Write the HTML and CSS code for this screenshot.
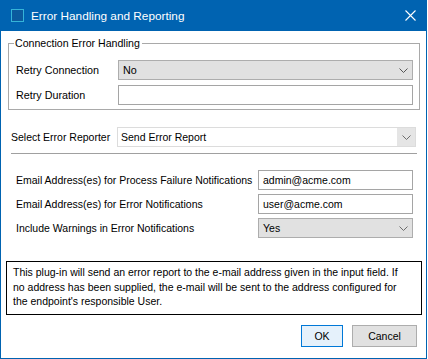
FILE: index.html
```html
<!DOCTYPE html>
<html>
<head>
<meta charset="utf-8">
<link rel="stylesheet" href="styles.css">
</head>
<body>
<div class="window">
  <div class="titlebar">
    <span class="app-icon"></span>
    <span class="title">Error Handling and Reporting</span>
    <svg class="close" width="11" height="11" viewBox="0 0 11 11"><path d="M0.5 0.5 L10.5 10.5 M10.5 0.5 L0.5 10.5" stroke="#fff" stroke-width="1.1" fill="none"/></svg>
  </div>
  <div class="content">
    <fieldset class="group">
      <legend>Connection Error Handling</legend>
      <div class="grow">
        <label class="seg">Retry Connection</label>
        <div class="select gray seg"><span>No</span><svg class="chev" width="9" height="5" viewBox="0 0 9 5"><path d="M0.5 0.5 L4.5 4.5 L8.5 0.5" stroke="#555" fill="none"/></svg></div>
      </div>
      <div class="grow">
        <label class="seg">Retry Duration</label>
        <div class="input"></div>
      </div>
    </fieldset>

    <div class="reporter">
      <label>Select Error Reporter</label>
      <div class="select white"><span>Send Error Report</span><span class="dropbtn"><svg class="chev" width="9" height="5" viewBox="0 0 9 5"><path d="M0.5 0.5 L4.5 4.5 L8.5 0.5" stroke="#6d6d6d" fill="none"/></svg></span></div>
    </div>
    <div class="sep"></div>

    <div class="emails">
      <label>Email Address(es) for Process Failure Notifications</label>
      <div class="input"><span>admin@acme.com</span></div>
      <label>Email Address(es) for Error Notifications</label>
      <div class="input"><span>user@acme.com</span></div>
      <label>Include Warnings in Error Notifications</label>
      <div class="select gray"><span>Yes</span><svg class="chev" width="9" height="5" viewBox="0 0 9 5"><path d="M0.5 0.5 L4.5 4.5 L8.5 0.5" stroke="#6d6d6d" fill="none"/></svg></div>
    </div>

    <div class="desc">This plug-in will send an error report to the e-mail address given in the input field. If<br>no address has been supplied, the e-mail will be sent to the address configured for<br>the endpoint's responsible User.</div>

    <div class="buttons">
      <div class="btn ok">OK</div>
      <div class="btn cancel">Cancel</div>
    </div>
  </div>
</div>
</body>
</html>
```

FILE: styles.css
```css
* { box-sizing: border-box; }
html, body { margin: 0; padding: 0; background: #fff; }
body {
  width: 428px;
  height: 359px;
  overflow: hidden;
  font-family: "Liberation Sans", Arial, sans-serif;
  font-size: 10.5px;
  color: #000;
}
.window {
  width: 427px;
  height: 359px;
  border: 1px solid #0063b1;
  border-top: none;
  background: #fff;
}
.titlebar {
  height: 31px;
  background: #0063b1;
  margin: 0 -1px;
  display: flex;
  align-items: center;
  padding-left: 11px;
  color: #fff;
}
.app-icon {
  width: 13px;
  height: 13px;
  border: 1px solid #35b4d8;
  background: #0b5a9e;
  margin-right: 7px;
}
.title {
  font-size: 11.8px;
  flex: 1;
  white-space: nowrap;
}
.close { margin-right: 11px; }
.seg { font-size: 10.75px; }

.group {
  margin: 5px 0 0 7px;
  width: 412px;
  border: 1px solid #a9a9a9;
  padding: 0 5px 4px 7px;
}
.group legend {
  font-size: 10.6px;
  padding: 0 2px 0 1px;
  margin-left: -2px;
  line-height: 14px;
}
.grow {
  display: flex;
  align-items: center;
  height: 20px;
  margin-top: 5px;
}
.group .grow:first-of-type { margin-top: 10px; }
.grow label { width: 102px; white-space: nowrap; }
.select, .input {
  height: 20px;
  border: 1px solid #adadad;
  display: flex;
  align-items: center;
  padding-left: 4px;
  white-space: nowrap;
}
.grow .select, .grow .input { width: 295px; }
.select.gray { background: #e1e1e1; }
.select span:first-child { flex: 1; }
.select .chev { margin-right: 4px; }
.input { background: #fff; border-color: #a5a5a5; }

.reporter {
  display: flex;
  align-items: center;
  margin: 17px 0 0 10px;
  height: 20px;
}
.reporter label { width: 106px; white-space: nowrap; }
.select.white {
  width: 299px;
  border-color: #dcdcdc;
  padding-left: 3px;
  padding-right: 0;
}
.dropbtn {
  width: 18px;
  height: 18px;
  background: #e5e5e5;
  display: flex;
  align-items: center;
  justify-content: center;
}
.dropbtn .chev { margin: 0; }
.sep {
  margin: 6px 0 0 10px;
  width: 406px;
  height: 1px;
  background: #a0a0a0;
}
.emails {
  display: grid;
  grid-template-columns: 242px 155px;
  row-gap: 4px;
  align-items: center;
  margin: 16px 0 0 15px;
}
.emails label { white-space: nowrap; }
.emails .input, .emails .select { height: 20px; }

.desc {
  margin: 23px 0 0 5px;
  width: 416px;
  height: 54px;
  border: 1px solid #000;
  padding: 3px 0 0 6px;
  line-height: 14.5px;
  white-space: nowrap;
}
.buttons {
  display: flex;
  justify-content: flex-end;
  gap: 9px;
  margin: 10px 9px 0 0;
}
.btn {
  height: 22px;
  display: flex;
  align-items: center;
  justify-content: center;
}
.ok {
  width: 42px;
  border: 1px solid #0078d7;
  background: #e5f1fb;
}
.cancel {
  width: 65px;
  border: 1px solid #adadad;
  background: #e1e1e1;
}
```
